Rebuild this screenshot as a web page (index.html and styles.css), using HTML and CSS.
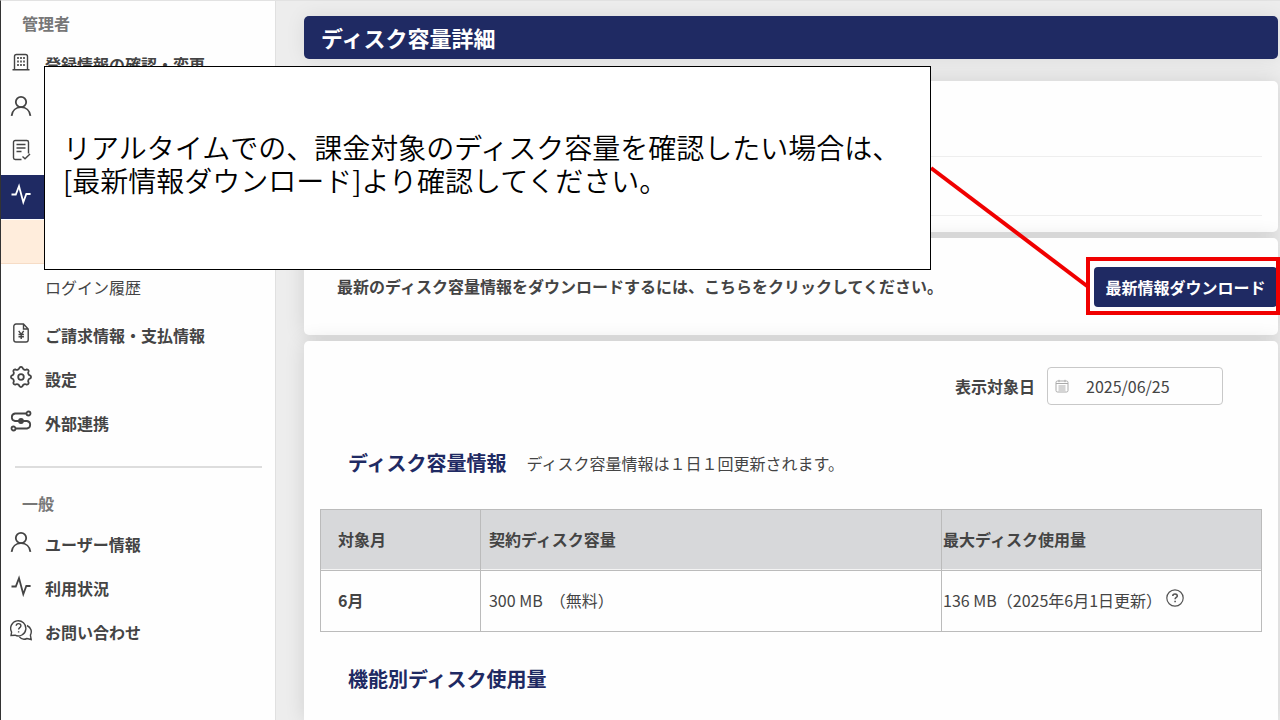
FILE: index.html
```html
<!DOCTYPE html>
<html lang="ja">
<head>
<meta charset="utf-8">
<meta name="viewport" content="width=device-width, initial-scale=1">
<title>ディスク容量詳細</title>
<link rel="stylesheet" href="styles.css">
</head>
<body>
<svg class="defs" aria-hidden="true">
  <symbol id="i-user" viewBox="0 0 22 22"><circle cx="11" cy="7" r="5.2"/><path d="M1.6 20.8c.6-5.200 4.400-8.600 9.400-8.600s8.800 3.400 9.400 8.600"/></symbol>
  <symbol id="i-pulse" viewBox="0 0 22 22"><path d="M1.500 11.500h4.300L9 3.200l4.300 16 3-8.200h4.300"/></symbol>
</svg>
<div class="app">
  <nav class="sidebar">
    <h2 class="group">管理者</h2>
    <a class="item" href="#"><svg class="icon thin" viewBox="0 0 22 22"><path d="M4.500 18.700V5.500a2 2 0 0 1 2-2h9a2 2 0 0 1 2 2v13.200M2.500 18.700h17"/><path class="dots" d="M7.200 7h1.600M10.200 7h1.600M13.200 7h1.600M7.200 10.500h1.600M10.200 10.500h1.600M13.200 10.500h1.600M7.200 14h1.600M10.200 14h1.600M13.200 14h1.600"/></svg><span>登録情報の確認・変更</span></a>
    <a class="item" href="#" aria-label="ユーザー"><svg class="icon"><use href="#i-user"/></svg></a>
    <a class="item" href="#" aria-label="申請"><svg class="icon thin" viewBox="0 0 22 22"><path d="M11.500 20.500H5.200a1.700 1.700 0 0 1-1.700-1.700V3.200a1.700 1.700 0 0 1 1.700-1.700h11.600a1.700 1.700 0 0 1 1.700 1.700v11.300M6.500 5.500h9M6.500 9h9M6.500 12.500h5M12.500 17.500l2.500 2.200 5-4.700"/></svg></a>
    <a class="item active" href="#" aria-label="利用状況"><svg class="icon"><use href="#i-pulse"/></svg></a>
    <a class="item sub current" href="#" aria-label="ディスク容量"></a>
    <a class="item sub" href="#"><span>ログイン履歴</span></a>
    <a class="item" href="#"><svg class="icon thin" viewBox="0 0 22 22"><path d="M13.500 2H6a2.200 2.200 0 0 0-2.200 2.200v13.600A2.200 2.200 0 0 0 6 20h10a2.200 2.200 0 0 0 2.200-2.200V7zM13.500 2v5h4.700"/><path d="M8.700 8.800l2.500 3.500 2.500-3.500M11.200 12.300v4.700M8.500 12.500h5.400M8.500 14.700h5.400"/></svg><span>ご請求情報・支払情報</span></a>
    <a class="item" href="#"><svg class="icon" viewBox="0 0 22 22"><circle cx="11" cy="11" r="2.800"/><path d="M9.530 1.720A1.800 1.800 0 0 1 12.470 1.720A2.600 2.600 0 0 0 16.530 3.400A1.800 1.800 0 0 1 18.600 5.470A2.600 2.600 0 0 0 20.280 9.530A1.800 1.800 0 0 1 20.280 12.470A2.600 2.600 0 0 0 18.600 16.530A1.800 1.800 0 0 1 16.530 18.600A2.600 2.600 0 0 0 12.470 20.280A1.800 1.800 0 0 1 9.530 20.280A2.600 2.600 0 0 0 5.470 18.600A1.800 1.800 0 0 1 3.400 16.530A2.600 2.600 0 0 0 1.720 12.470A1.800 1.800 0 0 1 1.720 9.530A2.600 2.600 0 0 0 3.400 5.470A1.800 1.800 0 0 1 5.470 3.400A2.600 2.600 0 0 0 9.530 1.720z"/></svg><span>設定</span></a>
    <a class="item" href="#"><svg class="icon" viewBox="0 0 22 22"><circle cx="18.500" cy="3.500" r="2"/><circle cx="3.500" cy="18.500" r="2"/><path d="M16.400 3.500H5a3.800 3.800 0 0 0 0 7.500h12a3.800 3.800 0 0 1 0 7.500H5.600"/><circle class="solid" cx="11" cy="11" r="2"/></svg><span>外部連携</span></a>
    <hr class="divider">
    <h2 class="group">一般</h2>
    <a class="item" href="#"><svg class="icon"><use href="#i-user"/></svg><span>ユーザー情報</span></a>
    <a class="item" href="#"><svg class="icon"><use href="#i-pulse"/></svg><span>利用状況</span></a>
    <a class="item" href="#"><svg class="icon thin" viewBox="0 0 22 22"><path d="M1 16.500l.6-3.500A7.600 7.600 0 1 1 5 16.200zM17 6.500c4.300 2 5.200 6.300 3.400 9.600l.8 4.400-4.200-1c-2.800 1.400-5.800.6-7.600-1.600"/><path d="M6.200 6.800c0-2.800 4.700-2.900 4.700-.1 0 1.900-2.300 1.900-2.300 3.800M8.600 12.200v1.300"/></svg><span>お問い合わせ</span></a>
  </nav>
  <main class="main">
    <h1 class="title">ディスク容量詳細</h1>
    <section class="card summary"><div class="line"></div><div class="line"></div></section>
    <section class="card download">
      <p>最新のディスク容量情報をダウンロードするには、こちらをクリックしてください。</p>
      <button class="button" type="button">最新情報ダウンロード</button>
    </section>
    <section class="card details">
      <div class="filter">
        <label for="date">表示対象日</label>
        <div class="date">
          <svg viewBox="0 0 14 14" aria-hidden="true"><rect x="1" y="2" width="12" height="11" rx="1.500"/><path d="M1 4.500h12M4 .8v2.400M10 .8v2.400M3.500 7h7M3.500 9h7M3.500 11h7"/></svg>
          <input id="date" type="text" value="2025/06/25">
        </div>
      </div>
      <div class="heading"><h2>ディスク容量情報</h2><p>ディスク容量情報は１日１回更新されます。</p></div>
      <table class="usage">
        <thead><tr><th>対象月</th><th>契約ディスク容量</th><th>最大ディスク使用量</th></tr></thead>
        <tbody><tr><th scope="row">6月</th><td>300 MB &nbsp;（無料）</td><td>136 MB（2025年6月1日更新）<svg class="help" viewBox="0 0 18 18" role="img" aria-label="ヘルプ"><circle cx="9" cy="9" r="8.200"/><path class="mark" d="M6.800 7c0-2.600 4.500-2.600 4.500-.1 0 1.500-2.200 1.600-2.200 3.300M9.100 11.700v1.500"/></svg></td></tr></tbody>
      </table>
      <div class="heading"><h2>機能別ディスク使用量</h2></div>
    </section>
  </main>
  <svg class="leader" viewBox="0 0 156 118" aria-hidden="true"><path d="M0 0L156 118"/></svg>
  <div class="highlight"></div>
  <aside class="callout"><p>リアルタイムでの、課金対象のディスク容量を確認したい場合は、<br>[最新情報ダウンロード]より確認してください。</p></aside>
</div>
</body>
</html>
```
FILE: styles.css
```css
* { box-sizing: border-box; }
body {
  margin: 0;
  overflow-x: hidden;
  color: #444;
  font: 16px/24px "Noto Sans CJK JP", sans-serif;
}
h1, h2, p { margin: 0; }
.defs { position: absolute; width: 0; height: 0; }
.app {
  position: relative;
  display: flex;
  min-height: 100vh;
  background: #ededed;
  border-top: 1px solid #e2e2e2;
  border-left: 1px solid #333;
}

/* Sidebar */
.sidebar {
  flex: 0 0 275px;
  background: #fefefe;
  border-right: 1px solid #e0e0e0;
}
.group {
  height: 42px;
  padding: 10px 21px 0;
  color: #777;
  font-size: 16px;
  font-weight: 700;
}
.item {
  display: flex;
  align-items: center;
  gap: 13px;
  height: 44px;
  padding: 0 0 2px 9px;
  color: #444;
  font-weight: 700;
  text-decoration: none;
}
.icon {
  width: 22px;
  height: 22px;
  margin-bottom: 4px;
  fill: none;
  stroke: currentColor;
  stroke-width: 1.8;
}
.icon.thin { stroke-width: 1.4; }
.icon .dots { stroke-width: 1.8; }
.icon .solid { fill: currentColor; }
.active { color: #fff; background: #1f2a63; }
.sub { padding-left: 44px; font-weight: 400; margin-bottom: 4px; }
.current { margin: 1px 0 2px; background: #ffeddc; border-bottom: 1px solid #f6dcc6; }
.divider {
  height: 2px;
  margin: 20px 13px 13px 14px;
  border: 0;
  background: #ddd;
}

/* Main column */
.main {
  display: flex;
  flex: 1;
  flex-direction: column;
  gap: 6px;
  min-width: 0;
  padding: 15px 2px 0 28px;
}
.title {
  margin-bottom: 16px;
  padding: 5px 17px 6px;
  color: #fff;
  background: #1f2a63;
  border-radius: 5px;
  box-shadow: 0 0 20px rgba(0, 0, 0, .08);
  font-size: 22px;
  line-height: 32px;
}
.card {
  background: #fefefe;
  border-radius: 5px;
  box-shadow: 0 0 20px rgba(0, 0, 0, .12);
}
.summary { padding: 16px; }
.line { height: 60px; border-bottom: 1px solid #eee; }
.line + .line { height: 59px; }
.download {
  display: flex;
  align-items: center;
  justify-content: space-between;
  padding: 29px 1px 28px 33px;
  font-weight: 700;
}
.download p { padding-bottom: 2px; }
.button {
  height: 40px;
  padding: 0 10px;
  min-width: 183px;
  color: #fff;
  background: #1f2a63;
  border: 0;
  border-radius: 4px;
  font: inherit;
}
.details {
  flex: 1;
  padding: 26px 16px 20px;
  border-radius: 5px 5px 0 0;
}
.filter {
  display: flex;
  align-items: center;
  justify-content: flex-end;
  gap: 12px;
  margin-right: 39px;
  font-weight: 700;
}
.date {
  display: flex;
  align-items: center;
  gap: 17px;
  width: 176px;
  height: 38px;
  padding-left: 7px;
  border: 1px solid #c8c8c8;
  border-radius: 4px;
}
.date svg { flex: none; width: 14px; height: 14px; fill: none; stroke: #aaa; }
.date input {
  width: 120px;
  padding: 0;
  color: #444;
  background: none;
  border: 0;
  font: 400 16px/24px "Noto Sans CJK JP", sans-serif;
}
.heading {
  display: flex;
  align-items: center;
  gap: 20px;
  height: 32px;
  margin: 42px 28px 30px;
}
.heading h2 { color: #1f2a63; font-size: 20px; line-height: 32px; }
.usage {
  width: 100%;
  border-collapse: collapse;
  table-layout: fixed;
}
.usage th, .usage td {
  height: 61px;
  padding: 0 1px 2px;
  border: 1px solid #bbb;
  text-align: left;
}
.usage thead th { background: #d7d8da; box-shadow: inset 0 -1px #f4f4f4; }
.usage tr > :nth-child(1) { width: 17%; padding-left: 17px; }
.usage tr > :nth-child(2) { width: 49%; padding-left: 8px; }
.usage + .heading { margin: 31px 28px 0; }
.help {
  width: 18px;
  height: 18px;
  margin-left: 4px;
  fill: none;
  stroke: #555;
  stroke-width: 1.2;
}
.help .mark { stroke-width: 1.6; }

/* Annotations laid over the screen */
.callout {
  position: absolute;
  top: 65px;
  left: 43px;
  display: flex;
  align-items: center;
  width: 887px;
  height: 204px;
  padding: 0 18px 8px;
  color: #000;
  background: #fff;
  border: 1px solid #000;
  font-size: 28px;
  font-weight: 350;
  line-height: 33px;
}
.highlight {
  position: absolute;
  top: 256px;
  right: 0;
  width: 194px;
  height: 58px;
  border: 4px solid #f00000;
}
.leader {
  position: absolute;
  top: 167px;
  right: 193px;
  width: 156px;
  height: 118px;
  overflow: visible;
  fill: none;
  stroke: #f00000;
  stroke-width: 4;
}
```
